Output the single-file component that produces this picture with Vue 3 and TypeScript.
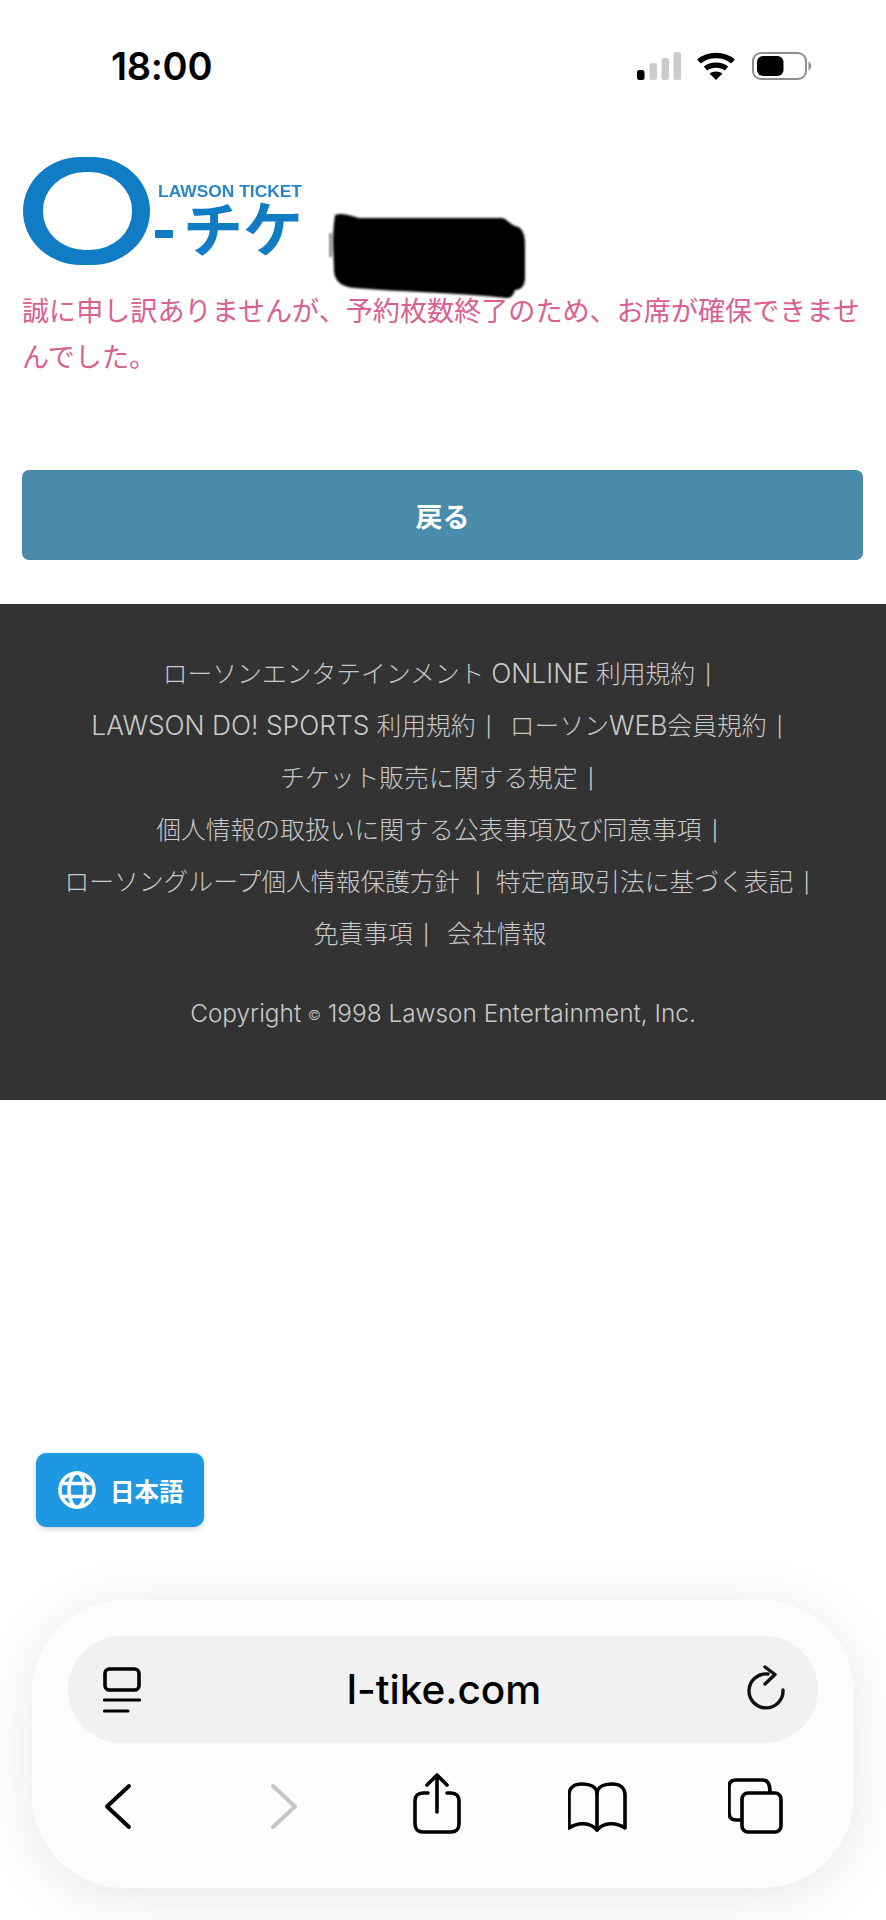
<template>
  <div class="page">
    <div class="status-bar">
      <span class="time">18:00</span>
      <div class="status-icons">
        <svg class="signal" width="44" height="28" viewBox="0 0 44 28">
          <rect x="0" y="18" width="7.5" height="10" rx="2.5" fill="#000" />
          <rect x="12.5" y="11" width="7.5" height="17" rx="2.5" fill="#ccc" />
          <rect x="24.5" y="6" width="7.5" height="22" rx="2.5" fill="#ccc" />
          <rect x="36.5" y="0" width="7.5" height="28" rx="2.5" fill="#ccc" />
        </svg>
        <svg class="wifi" width="38" height="28" viewBox="0 0 38 28">
          <path d="M2 9.5C11 1.5 27 1.5 36 9.5" fill="none" stroke="#000" stroke-width="5.6" />
          <path d="M8.5 16.5C14 12 24 12 29.5 16.5" fill="none" stroke="#000" stroke-width="5.4" />
          <path d="M12.5 21.5C16 18.7 22 18.7 25.5 21.5L19 28Z" fill="#000" />
        </svg>
        <svg class="battery" width="62" height="28" viewBox="0 0 62 28">
          <rect x="2" y="1" width="53" height="26" rx="8" fill="#fff" stroke="#8e8e8e" stroke-width="2" />
          <rect x="6" y="4" width="26.5" height="20" rx="6" fill="#000" />
          <path d="M57.5 9.5C61 11 61 17 57.5 18.5Z" fill="#8e8e8e" />
        </svg>
      </div>
    </div>

    <header class="logo-row">
      <svg class="logo" width="290" height="122" viewBox="0 0 290 122">
        <rect x="1" y="2" width="127" height="108" rx="58" ry="54" fill="#0f7cc3" />
        <rect x="21" y="17" width="89" height="78" rx="42" ry="38" fill="#fff" />
        <rect x="133" y="75" width="18" height="8" rx="1" fill="#0f7cc3" />
        <text x="136" y="42" class="logo-en" textLength="144" lengthAdjust="spacingAndGlyphs">LAWSON TICKET</text>
        <text x="161" y="97" class="logo-ja">チケ</text>
      </svg>
      <svg class="redaction" width="200" height="88" viewBox="0 0 200 88">
        <path d="M1.5 21V45M4 28H8M4 38H8" fill="none" stroke="#222" stroke-width="1.4" />
        <path d="M6 3C14 0 22 4 30 6L172 6C178 6 180 12 186 14C194 15 196 24 196 32L196 66C196 74 192 78 186 78C184 84 182 86 178 86C120 80 70 80 26 76C14 75 6 70 5 60L4 30C4 20 5 10 6 3Z" fill="#000" />
      </svg>
    </header>

    <p class="notice">誠に申し訳ありませんが、予約枚数終了のため、お席が確保できませんでした。</p>

    <button class="back-btn" type="button">戻る</button>

    <footer class="site-footer">
      <p class="footer-line">ローソンエンタテインメント <span class="lat">ONLINE</span> 利用規約<span class="sep">|</span></p>
      <p class="footer-line"><span class="lat">LAWSON DO! SPORTS</span> 利用規約<span class="sep">|</span><span class="gap"></span>ローソン<span class="lat">WEB</span>会員規約<span class="sep">|</span></p>
      <p class="footer-line">チケット販売に関する規定<span class="sep">|</span></p>
      <p class="footer-line">個人情報の取扱いに関する公表事項及び同意事項<span class="sep">|</span></p>
      <p class="footer-line">ローソングループ個人情報保護方針<span class="sep wide">|</span><span class="gap"></span>特定商取引法に基づく表記<span class="sep">|</span></p>
      <p class="footer-line last">免責事項<span class="sep">|</span><span class="gap"></span>会社情報</p>
      <p class="copyright">Copyright <span class="copy-mark">©</span> 1998 Lawson Entertainment, Inc.</p>
    </footer>

    <button class="lang-btn" type="button">
      <svg width="38" height="38" viewBox="0 0 38 38" fill="none" stroke="#fff" stroke-width="3.6">
        <circle cx="19" cy="19" r="17" />
        <ellipse cx="19" cy="19" rx="8" ry="17" />
        <path d="M5 12.5H33M5 25.5H33" />
      </svg>
      <span>日本語</span>
    </button>

    <div class="browser-bar">
      <div class="url-pill">
        <svg width="38" height="46" viewBox="0 0 38 46" fill="none" stroke="#000" stroke-linecap="round">
          <rect x="2" y="2" width="34" height="21" rx="4.5" stroke-width="3.6" />
          <path d="M1.5 33H36.5M1.5 44H25" stroke-width="3.2" />
        </svg>
        <span class="url">l-tike.com</span>
        <svg width="38" height="50" viewBox="0 0 38 50" fill="none" stroke="#111" stroke-width="3.4" stroke-linecap="round" stroke-linejoin="round">
          <path d="M21 9A17 17 0 1 0 36 25" />
          <path d="M18 2L28 9.5L18 19" />
        </svg>
      </div>
      <div class="toolbar">
        <svg width="60" height="64" viewBox="0 0 60 64" fill="none" stroke="#000" stroke-width="4" stroke-linecap="round" stroke-linejoin="round">
          <path d="M41 14L19 34.5L41 55" />
        </svg>
        <svg width="60" height="64" viewBox="0 0 60 64" fill="none" stroke="#c6c6c6" stroke-width="4" stroke-linecap="round" stroke-linejoin="round">
          <path d="M25 14L47 34.5L25 55" />
        </svg>
        <svg width="60" height="64" viewBox="0 0 60 64" fill="none" stroke="#000" stroke-width="3.6" stroke-linecap="round" stroke-linejoin="round">
          <path d="M20 21H15C10 21 7 24 7 29V52C7 57 10 60 15 60H43C48 60 51 57 51 52V29C51 24 48 21 43 21H39" />
          <path d="M29 40V3M19 13L29 3L39 13" />
        </svg>
        <svg width="60" height="64" viewBox="0 0 60 64" fill="none" stroke="#000" stroke-width="3.6" stroke-linecap="round" stroke-linejoin="round">
          <path d="M1 56V23C1 16 6 12 14 12C22 12 29 15 29 22C29 15 36 12 44 12C52 12 57 16 57 23V56C48 50 36 50 29 58C22 50 10 50 1 56Z" />
          <path d="M29 22V58" />
        </svg>
        <svg width="60" height="64" viewBox="0 0 60 64" fill="none" stroke="#000" stroke-width="3.6" stroke-linejoin="round">
          <path d="M13 48H8C3 48 1 45 1 40V15C1 10 4 8 8 8H35C39 8 42 11 42 20" />
          <rect x="14" y="21" width="39" height="39" rx="6" />
        </svg>
      </div>
    </div>
  </div>
</template>

<script setup lang="ts"></script>

<style>
body {
  background: #fff;
}
</style>

<style scoped>
.page {
  position: relative;
  width: 886px;
  height: 1920px;
  overflow: hidden;
  background: #fff;
  font-family: "Noto Sans CJK JP", "Liberation Sans", sans-serif;
}

.status-bar {
  display: flex;
  justify-content: space-between;
  align-items: center;
  height: 28px;
  padding: 52px 73px 0 111px;
}

.time {
  font-family: Inter, sans-serif;
  font-size: 38px;
  font-weight: 600;
  letter-spacing: -0.3px;
  color: #000;
}

.status-icons {
  display: flex;
  align-items: center;
  gap: 16px;
}

.logo-row {
  position: relative;
  padding: 75px 0 0 22px;
  height: 110px;
}

.logo {
  display: block;
  filter: blur(0.6px);
}

.logo-en {
  font-family: "Liberation Sans", sans-serif;
  font-size: 16.5px;
  font-weight: 700;
  fill: #2a86c8;
}

.logo-ja {
  font-family: "Noto Sans CJK JP", sans-serif;
  font-size: 60px;
  font-weight: 700;
  fill: #0f7cc3;
}

.redaction {
  position: absolute;
  left: 329px;
  top: 132px;
  filter: blur(0.8px);
}

.notice {
  margin: 22px 0 0;
  padding: 0 20px 0 22px;
  font-size: 27.1px;
  line-height: 46px;
  color: #d9608f;
}

.back-btn {
  display: block;
  width: 841px;
  height: 90px;
  margin: 91px 0 0 22px;
  border: none;
  border-radius: 7px;
  background: #4a8bab;
  color: #fff;
  font-family: inherit;
  font-size: 27px;
  font-weight: 700;
}

.site-footer {
  margin-top: 44px;
  height: 496px;
  box-sizing: border-box;
  padding-top: 44px;
  background: #333;
  color: #c9c9c9;
  text-align: center;
}

.footer-line {
  margin: 0;
  height: 52px;
  padding-right: 12px;
  font-family: Inter, "Noto Sans CJK JP", sans-serif;
  font-size: 24.8px;
  font-weight: 300;
  line-height: 52px;
}

.footer-line.last {
  padding-right: 26px;
}

.lat {
  font-size: 26.4px;
  font-weight: 300;
  line-height: 1;
}

.sep {
  margin-left: 10px;
  font-family: Roboto, sans-serif;
  font-size: 28px;
  font-weight: 300;
  line-height: 1;
}

.sep.wide {
  margin-left: 15px;
  margin-right: -3px;
}

.gap {
  display: inline-block;
  width: 18px;
}

.copyright {
  margin: 36px 0 0;
  font-family: Inter, sans-serif;
  font-size: 24.4px;
  font-weight: 300;
  line-height: 34px;
}

.copy-mark {
  font-size: 14px;
  vertical-align: 2px;
}

.lang-btn {
  position: absolute;
  left: 36px;
  top: 1453px;
  display: flex;
  align-items: center;
  gap: 14px;
  width: 168px;
  height: 74px;
  padding: 0 0 0 22px;
  border: none;
  border-radius: 10px;
  background: #1e98e3;
  box-shadow: 0 2px 5px rgba(0, 0, 0, 0.18);
  color: #fff;
  font-family: inherit;
  font-size: 24.5px;
  font-weight: 700;
}

.browser-bar {
  position: absolute;
  left: 32px;
  top: 1600px;
  width: 822px;
  height: 288px;
  box-sizing: border-box;
  padding: 36px 36px 0;
  border-radius: 92px;
  background: #fcfcfd;
  box-shadow: 0 8px 60px rgba(0, 0, 0, 0.1);
}

.url-pill {
  display: flex;
  justify-content: space-between;
  align-items: center;
  height: 107px;
  padding: 0 33px 0 35px;
  border-radius: 54px;
  background: #f1f1f2;
}

.url {
  font-family: Inter, sans-serif;
  font-size: 40.5px;
  font-weight: 500;
  color: #000;
}

.toolbar {
  display: flex;
  gap: 100px;
  padding: 29px 0 0 20px;
}
</style>
